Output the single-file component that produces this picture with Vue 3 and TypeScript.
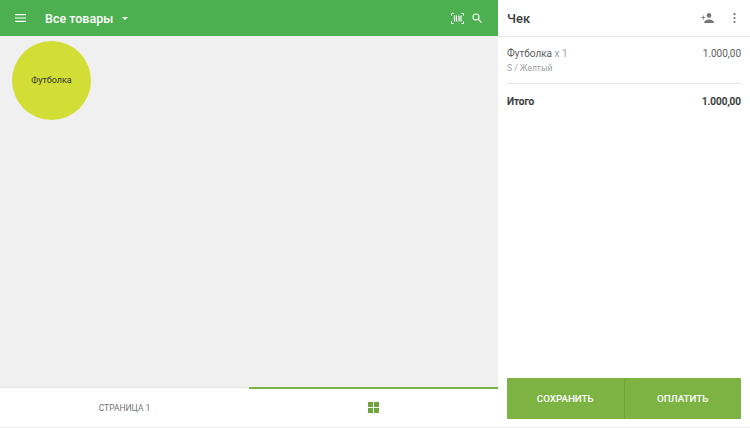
<script setup lang="ts">
const item = { name: 'Футболка', qty: 'x 1', variant: 'S / Желтый', price: '1.000,00' }
</script>

<template>
  <div class="app">
    <section class="left">
      <header class="bar">
        <svg class="menu" width="11" height="8" viewBox="0 0 11 8"><path d="M0 0h11v1.200H0zM0 3.400h11v1.200H0zM0 6.800h11V8H0z" fill="#fff" /></svg>
        <span class="title">Все товары</span>
        <svg class="caret" width="6" height="3" viewBox="0 0 6 3"><path d="M0 0h6L3 3z" fill="#fff" /></svg>
        <span class="spacer"></span>
        <svg class="scan" width="13" height="11" viewBox="0 0 13 11" fill="none" stroke="#fff">
          <path d="M2.500 .5H.5v2M10.500 .5h2v2M2.500 10.500H.5v-2M10.500 10.500h2v-2" stroke-width="1" />
          <path d="M3.500 2.500v6M5.500 2.500v6M8 2.500v6M10 2.500v6" stroke-width="1.200" />
        </svg>
        <svg class="search" width="10" height="10" viewBox="0 0 10 10" fill="none" stroke="#fff" stroke-width="1.100"><circle cx="4" cy="4" r="3" /><path d="M6.200 6.200l3.400 3.400" /></svg>
      </header>
      <main class="grid">
        <div class="tile">{{ item.name }}</div>
      </main>
      <nav class="tabs">
        <div class="tab">СТРАНИЦА 1</div>
        <div class="tab active">
          <svg width="11" height="11" viewBox="0 0 11 11" fill="#6fa53e"><path d="M0 0h5v5H0zM6 0h5v5H6zM0 6h5v5H0zM6 6h5v5H6z" /></svg>
        </div>
      </nav>
    </section>
    <aside class="right">
      <header class="head">
        <span class="head-title">Чек</span>
        <span class="spacer"></span>
        <svg class="add" width="13" height="10" viewBox="0 0 13 10" fill="#757575"><circle cx="8" cy="2.400" r="2.300" /><path d="M3.200 10c0-2.400 3.100-3.400 4.800-3.400s5 1 5 3.400zM0 4.200h1.800V2.500h.9v1.700h1.800v.9H2.700v1.700h-.9V5.100H0z" /></svg>
        <svg class="dots" width="3" height="10" viewBox="0 0 3 10" fill="#757575"><circle cx="1.500" cy="1.200" r="1.100" /><circle cx="1.500" cy="5" r="1.100" /><circle cx="1.500" cy="8.800" r="1.100" /></svg>
      </header>
      <div class="items">
        <div class="line">
          <span class="name">{{ item.name }} <span class="qty">{{ item.qty }}</span></span>
          <span class="price">{{ item.price }}</span>
        </div>
        <div class="variant">{{ item.variant }}</div>
      </div>
      <div class="total">
        <span>Итого</span>
        <span>{{ item.price }}</span>
      </div>
      <div class="actions">
        <button class="btn">СОХРАНИТЬ</button>
        <button class="btn">ОПЛАТИТЬ</button>
      </div>
    </aside>
  </div>
</template>

<style>
html, body { margin: 0; background: #fff; }
</style>

<style scoped>
.app {
  display: flex;
  width: 750px;
  height: 428px;
  overflow: hidden;
  font-family: Roboto, "Noto Sans", sans-serif;
  background: #fff;
  border-bottom: 1px solid #efefef;
  box-sizing: border-box;
}
.left {
  width: 498px;
  display: flex;
  flex-direction: column;
}
.bar {
  height: 36px;
  flex: none;
  background: #4caf50;
  display: flex;
  align-items: center;
  padding: 0 16px 0 15px;
  box-sizing: border-box;
  color: #fff;
}
.title {
  margin-left: 19px;
  font-size: 12.500px;
  font-weight: 500;
}
.caret { margin-left: 9px; }
.spacer { flex: 1; }
.search { margin-left: 8px; }
.grid {
  flex: 1;
  background: #f0f0f0;
  padding: 5px 12px;
}
.tile {
  width: 79px;
  height: 79px;
  padding-bottom: 1px;
  box-sizing: border-box;
  border-radius: 50%;
  background: #d2dd36;
  display: flex;
  align-items: center;
  justify-content: center;
  font-size: 9px;
  color: #333;
}
.tabs {
  height: 40px;
  flex: none;
  display: flex;
  background: #fff;
  border-top: 1px solid #e6e6e6;
  box-sizing: border-box;
}
.tab {
  flex: 1;
  display: flex;
  align-items: center;
  justify-content: center;
  font-size: 8.500px;
  color: #757575;
}
.tab.active {
  margin-top: -1px;
  border-top: 2px solid #7cb342;
  padding-bottom: 2px;
}
.right {
  flex: 1;
  display: flex;
  flex-direction: column;
  padding: 0 9px;
  background: #fff;
}
.head {
  height: 37px;
  flex: none;
  margin: 0 -9px;
  padding: 0 14px 0 9px;
  display: flex;
  align-items: center;
  border-bottom: 1px solid #e8e8e8;
  box-sizing: border-box;
}
.head-title {
  font-size: 13px;
  font-weight: 500;
  color: #3d3d3d;
}
.dots { margin-left: 19px; }
.items {
  padding: 10px 0 9px;
  border-bottom: 1px solid #e8e8e8;
}
.line {
  display: flex;
  justify-content: space-between;
  font-size: 10px;
  line-height: 13px;
  color: #616161;
}
.qty { color: #a0a0a0; }
.variant {
  margin-top: 3px;
  font-size: 8.500px;
  line-height: 11px;
  color: #a0a0a0;
}
.total {
  display: flex;
  justify-content: space-between;
  margin-top: 11px;
  font-size: 10px;
  line-height: 13px;
  font-weight: 500;
  color: #333;
  -webkit-text-stroke: .2px #333;
}
.actions {
  margin-top: auto;
  margin-bottom: 8px;
  display: flex;
  height: 41px;
  border-radius: 1px;
  overflow: hidden;
}
.btn {
  flex: 1;
  border: 0;
  padding: 0;
  background: #7cb342;
  color: #fff;
  font-family: inherit;
  font-size: 9.750px;
  font-weight: 500;
}
.btn + .btn { border-left: 1px solid #70a33b; }
</style>
